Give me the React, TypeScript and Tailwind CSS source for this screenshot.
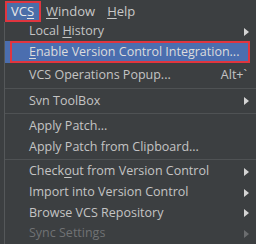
import type { ReactNode } from "react";

type Item = {
  label: ReactNode;
  h: string;
  arrow?: boolean;
  shortcut?: string;
  disabled?: boolean;
  sepAfter?: boolean;
};

const U = ({ c }: { c: string }) => <span className="underline underline-offset-2">{c}</span>;

const items: Item[] = [
  { label: <>Local <U c="H" />istory</>, h: "h-[19px]", arrow: true },
  { label: "VCS Operations Popup...", h: "h-[24px]", shortcut: "Alt+`", sepAfter: true },
  { label: "Svn ToolBox", h: "h-[22px]", arrow: true, sepAfter: true },
  { label: "Apply Patch...", h: "h-[22px]" },
  { label: "Apply Patch from Clipboard...", h: "h-[21px]", sepAfter: true },
  { label: <>Check<U c="o" />ut from Version Control</>, h: "h-[21px]", arrow: true },
  { label: "Import into Version Control", h: "h-[21px]", arrow: true },
  { label: "Browse VCS Repository", h: "h-[20px]", arrow: true },
  { label: "Sync Settings", h: "h-[21px]", arrow: true, disabled: true },
];

function Arrow({ dim }: { dim?: boolean }) {
  return (
    <svg width="5" height="8" viewBox="0 0 5 8" className="absolute right-[7px]">
      <path d="M0 0 L5 4 L0 8 Z" fill={dim ? "#6b6d6f" : "#d4d4d4"} />
    </svg>
  );
}

function Row({ it }: { it: Item }) {
  return (
    <>
      <div
        className={`relative flex items-center pl-[24px] ${it.h} ${
          it.disabled ? "text-[#707274]" : "text-[#c4c4c4]"
        }`}
      >
        <span>{it.label}</span>
        {it.shortcut && <span className="absolute right-[9px]">{it.shortcut}</span>}
        {it.arrow && <Arrow dim={it.disabled} />}
      </div>
      {it.sepAfter && <div className="h-px bg-[#4f5254] my-px" />}
    </>
  );
}

export default function App() {
  const [first, ...rest] = items;
  return (
    <div
      className="w-[256px] h-[244px] overflow-hidden bg-[#3c3f41] text-[12.5px] leading-none"
      style={{ fontFamily: '"Open Sans", "Noto Sans", sans-serif' }}
    >
      <div className="flex items-center h-[22px] text-[#c8c8c8] text-[13px]">
        <div className="ml-[5px] mt-[1px] h-[21px] w-[36px] flex items-center pl-[4px] bg-[#4a6ea8] border-2 border-[#e0353f] text-[#e8e8e8]">
          VC<U c="S" />
        </div>
        <span className="ml-[5px]"><U c="W" />indow</span>
        <span className="ml-[12px]"><U c="H" />elp</span>
      </div>
      <div className="ml-[4px] border-l border-[#55585a] h-full">
        <Row it={first} />
        <div className="relative h-[22px] mr-[6px] bg-[#4b6eaf] flex items-center pl-[24px] text-[#dcdcdc]">
          <span>
            <U c="E" />nable Version Control Integration...
          </span>
          <div className="absolute inset-y-0 left-[5px] right-0 border-2 border-[#e0353f]" />
        </div>
        {rest.map((it, i) => (
          <Row key={i} it={it} />
        ))}
      </div>
    </div>
  );
}
